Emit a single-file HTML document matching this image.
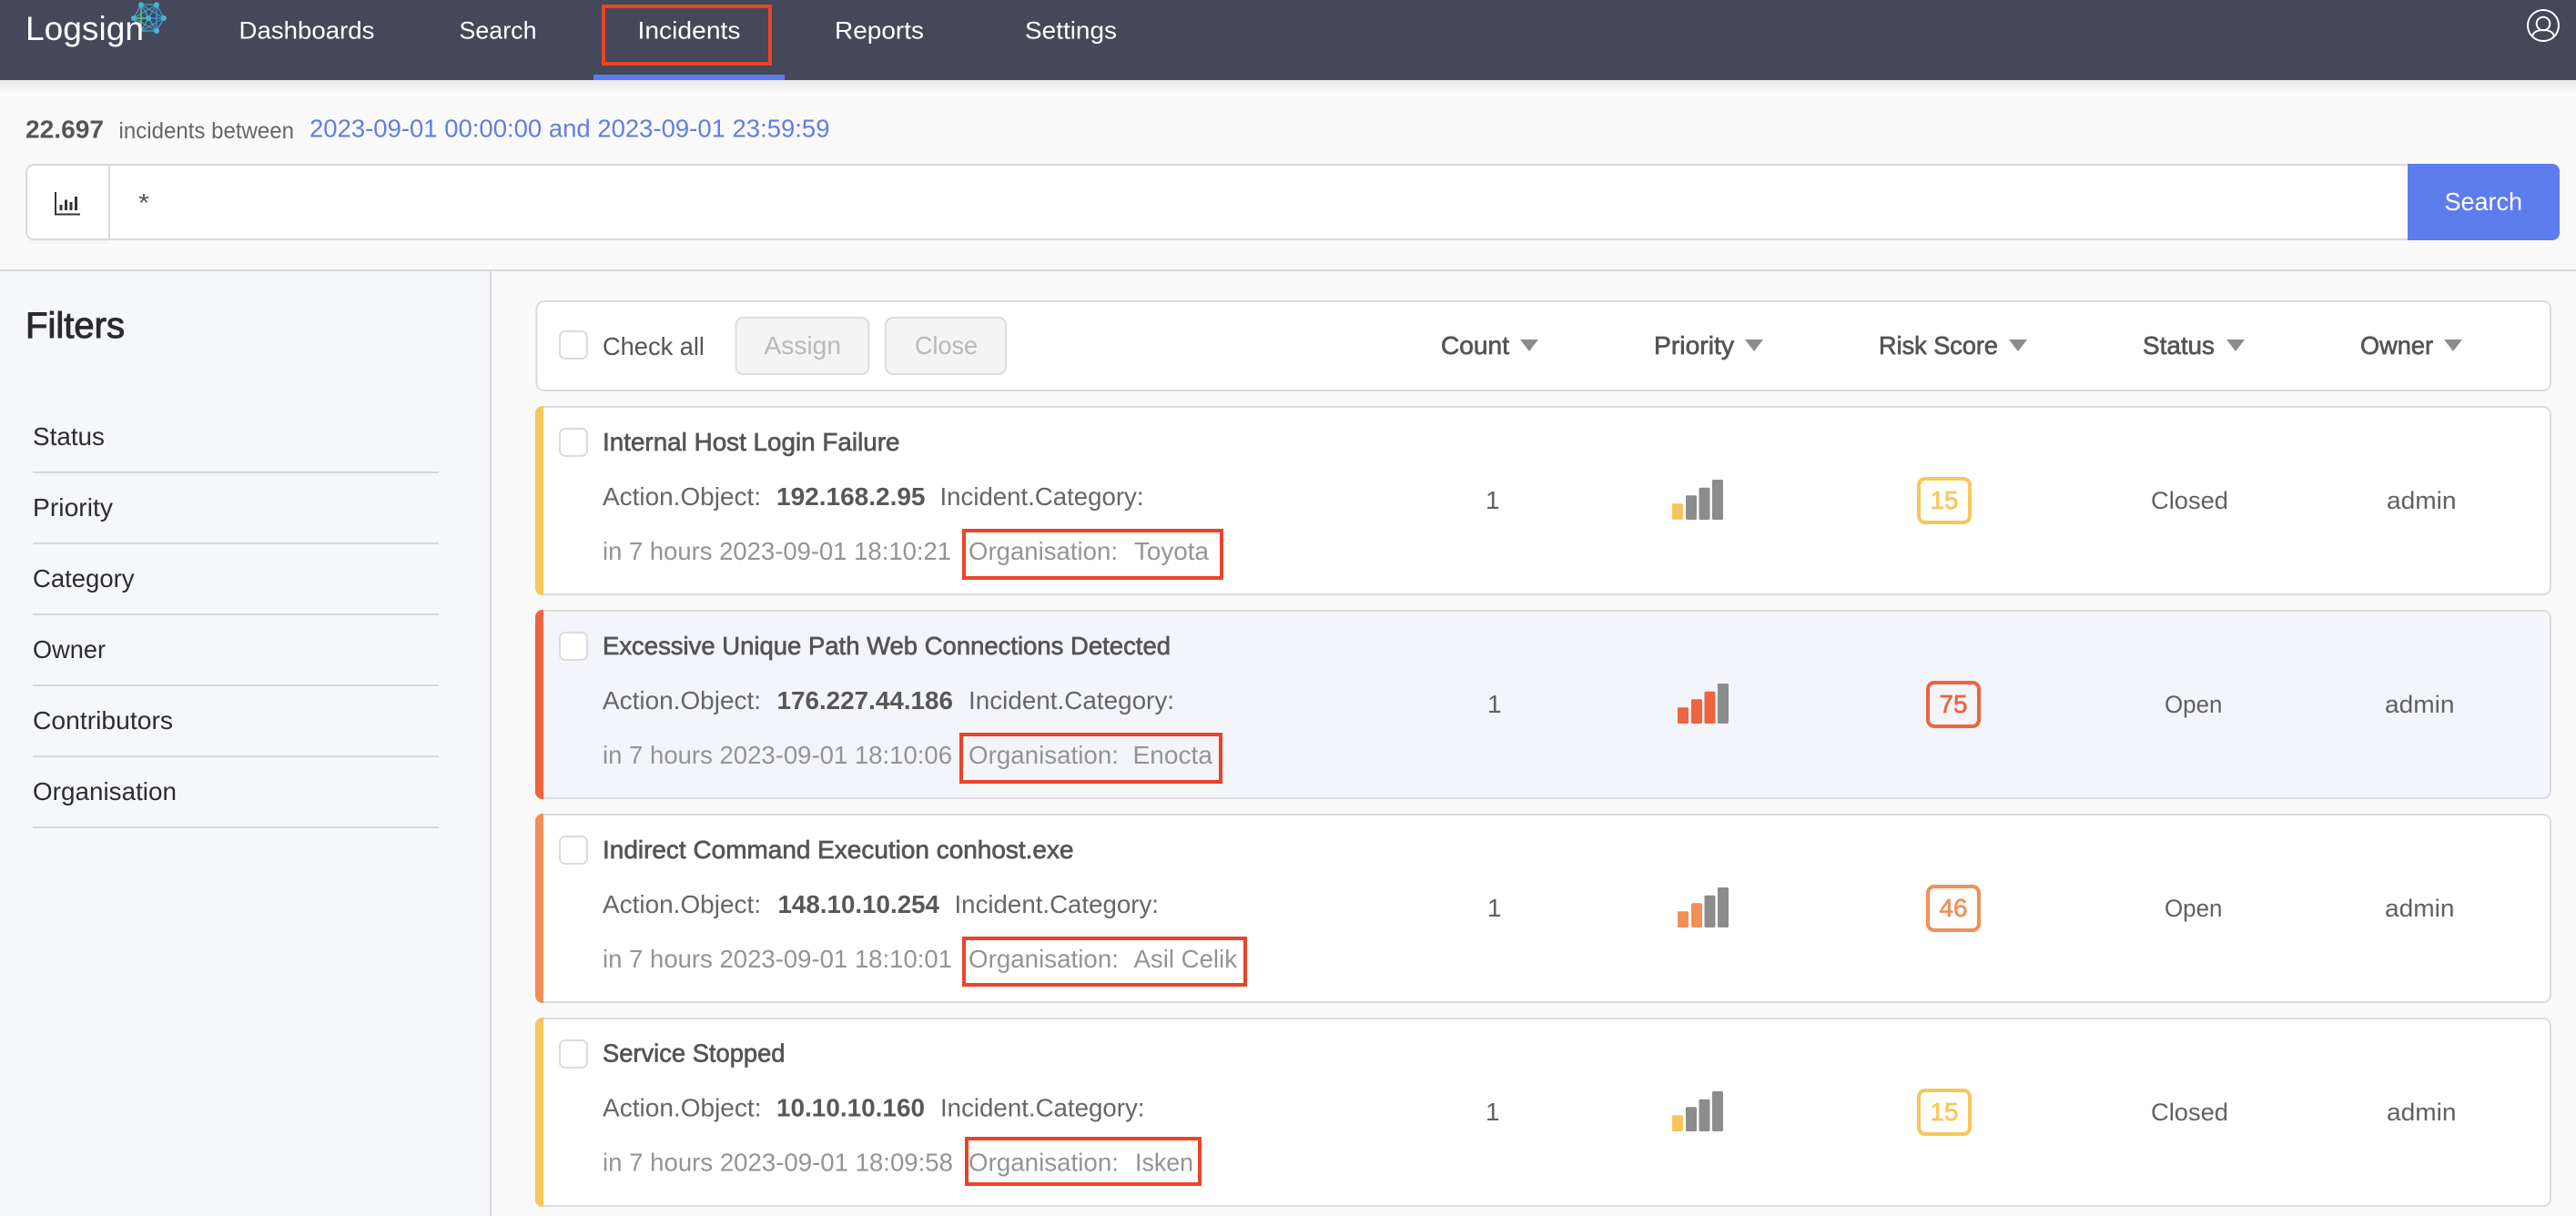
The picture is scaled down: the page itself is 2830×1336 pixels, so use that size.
<!DOCTYPE html>
<html lang="en"><head><meta charset="utf-8"><title>Logsign Incidents</title>
<style>
html,body{margin:0;padding:0;background:#fafafa;width:2830px;height:1336px;overflow:hidden}
svg{display:block}
text{font-family:"Liberation Sans",sans-serif;font-size:28px;white-space:pre}
.nav{font-size:27px;fill:#fff}
.m{stroke-width:.7px}
.side{fill:#2d2d2d}
.t{fill:#555;stroke:#555}
.l{fill:#666}
.b{fill:#585858;font-weight:bold}
.d{fill:#949494}
.h{fill:#555;stroke:#555}
.v{fill:#616161;font-size:27px}
.one{fill:#616161;font-size:28px}
.red{fill:none;stroke:#ea4426;stroke-width:4}
.card{stroke:#dcdcdc;stroke-width:2}
.cb{fill:#fff;stroke:#dcdcdc;stroke-width:2}
.tri{fill:#8c8c8c}
.g{fill:#8c8c8c}
</style></head>
<body>
<svg xmlns="http://www.w3.org/2000/svg" width="2830" height="1336" viewBox="0 0 2830 1336">
<defs><linearGradient id="sh" x1="0" y1="0" x2="0" y2="1"><stop offset="0" stop-color="#000" stop-opacity=".07"/><stop offset="1" stop-color="#000" stop-opacity="0"/></linearGradient></defs>
<rect width="2830" height="1336" fill="#fafafa"/>
<!-- header -->
<rect x="0" y="88" width="2830" height="14" fill="url(#sh)"/>
<rect width="2830" height="88" fill="#454859"/>
<rect x="652" y="82" width="210" height="6" fill="#5c7bee"/>
<rect x="663" y="7" width="183" height="63" class="red"/>
<g stroke-width="1.2" fill="none">
<path d="M155 5H172L180 20L172 34H155L147 20Z" stroke="#41a9d8"/>
<path d="M155 5L163 20L172 34M172 5L163 20L155 34M155 5L172 34M172 5L155 34M155 5L180 20M172 5L147 20M147 20L172 34M180 20L155 34" stroke="#3f9fc4"/>
<path d="M147 20H163M155 5V34" stroke="#63c77b" stroke-width="1.6"/>
<path d="M163 20H180M172 5V34" stroke="#3f8fe0" stroke-width="1.6"/>
</g>
<g fill="#45b6d2"><circle cx="155" cy="5.3" r="3"/><circle cx="172" cy="5.3" r="3"/><circle cx="147" cy="20" r="3"/><circle cx="163" cy="20" r="3"/><circle cx="180" cy="20" r="3"/><circle cx="172" cy="34" r="3"/></g>
<text x="28" y="44" fill="#fff" textLength="130" lengthAdjust="spacingAndGlyphs" style="font-size:37px">Logsign</text>
<text class="nav" x="262.500" y="42.500" textLength="149" lengthAdjust="spacingAndGlyphs">Dashboards</text>
<text class="nav" x="504.500" y="42.500" textLength="85" lengthAdjust="spacingAndGlyphs">Search</text>
<text class="nav" x="700.500" y="42.500" textLength="113" lengthAdjust="spacingAndGlyphs">Incidents</text>
<text class="nav" x="917" y="42.500" textLength="98" lengthAdjust="spacingAndGlyphs">Reports</text>
<text class="nav" x="1126" y="42.500" textLength="101" lengthAdjust="spacingAndGlyphs">Settings</text>
<g fill="none" stroke="#fff" stroke-width="2"><circle cx="2794" cy="28" r="17"/><circle cx="2794" cy="26" r="7.300"/><path d="M2782 40C2783 35 2788 33 2794 33C2800 33 2805 35 2806 40"/></g>
<!-- summary -->
<text x="28" y="151.500" style="font-weight:bold" fill="#555" textLength="86" lengthAdjust="spacingAndGlyphs">22.697</text>
<text x="130.500" y="152" style="font-size:25px" fill="#666" textLength="192.500" lengthAdjust="spacingAndGlyphs">incidents between</text>
<text x="340" y="150.500" fill="#5f7de8" textLength="571.500" lengthAdjust="spacingAndGlyphs">2023-09-01 00:00:00 and 2023-09-01 23:59:59</text>
<!-- search bar -->
<rect x="28" y="264" width="92" height="4" fill="#000" opacity=".02"/>
<path d="M2646 181H37a8 8 0 0 0-8 8V255a8 8 0 0 0 8 8H2646" fill="#fff" stroke="#d9d9d9" stroke-width="2"/>
<rect x="119" y="181" width="2" height="82" fill="#d9d9d9"/>
<path d="M61 211V235.500H88" fill="none" stroke="#333" stroke-width="2"/>
<g fill="#333"><rect x="65.500" y="225" width="3" height="6"/><rect x="71" y="219.500" width="3" height="11.500"/><rect x="76.500" y="222" width="3" height="9"/><rect x="82" y="216" width="3" height="15"/></g>
<text x="152" y="232" fill="#555" textLength="12" lengthAdjust="spacingAndGlyphs">*</text>
<path d="M2645 180H2804a8 8 0 0 1 8 8V256a8 8 0 0 1-8 8H2645Z" fill="#5d7cee"/>
<text x="2685.500" y="231" fill="#fff" textLength="85.500" lengthAdjust="spacingAndGlyphs">Search</text>
<rect x="0" y="296" width="2830" height="2" fill="#d9d9d9"/>
<!-- sidebar -->
<rect x="0" y="298" width="538" height="1038" fill="#f5f7fb"/>
<rect x="538" y="298" width="2" height="1038" fill="#d9d9d9"/>
<text x="28" y="371" style="font-size:40px;stroke-width:1px" stroke="#2b2b2b" fill="#2b2b2b" textLength="109" lengthAdjust="spacingAndGlyphs">Filters</text>
<text class="side" x="36" y="489" textLength="79" lengthAdjust="spacingAndGlyphs">Status</text>
<text class="side" x="36" y="567" textLength="88" lengthAdjust="spacingAndGlyphs">Priority</text>
<text class="side" x="36" y="645" textLength="111.500" lengthAdjust="spacingAndGlyphs">Category</text>
<text class="side" x="36" y="723" textLength="80" lengthAdjust="spacingAndGlyphs">Owner</text>
<text class="side" x="36" y="801" textLength="154" lengthAdjust="spacingAndGlyphs">Contributors</text>
<text class="side" x="36" y="879" textLength="158" lengthAdjust="spacingAndGlyphs">Organisation</text>
<g fill="#d6d8da"><rect x="36" y="518" width="446" height="2"/><rect x="36" y="596" width="446" height="2"/><rect x="36" y="674" width="446" height="2"/><rect x="36" y="752" width="446" height="2"/><rect x="36" y="830" width="446" height="2"/><rect x="36" y="908" width="446" height="2"/></g>
<!-- toolbar -->
<rect x="589.500" y="331" width="2212.500" height="98" rx="8" fill="#fff" class="card"/>
<rect x="615" y="364" width="30" height="30" rx="6" class="cb"/>
<text x="662" y="390" fill="#555" textLength="112" lengthAdjust="spacingAndGlyphs">Check all</text>
<rect x="808.500" y="349" width="146" height="62" rx="8" fill="#f4f4f4" stroke="#dcdcdc" stroke-width="2"/>
<text x="839.500" y="389" fill="#b9b9b9" textLength="84.500" lengthAdjust="spacingAndGlyphs">Assign</text>
<rect x="973" y="349" width="132" height="62" rx="8" fill="#f4f4f4" stroke="#dcdcdc" stroke-width="2"/>
<text x="1005" y="389" fill="#b9b9b9" textLength="69" lengthAdjust="spacingAndGlyphs">Close</text>
<text class="h m" x="1583" y="389" textLength="75" lengthAdjust="spacingAndGlyphs">Count</text>
<path class="tri" d="M1670 373H1690L1680 386Z"/>
<text class="h m" x="1817" y="389" textLength="88" lengthAdjust="spacingAndGlyphs">Priority</text>
<path class="tri" d="M1917 373H1937L1927 386Z"/>
<text class="h m" x="2064" y="389" textLength="131" lengthAdjust="spacingAndGlyphs">Risk Score</text>
<path class="tri" d="M2207 373H2227L2217 386Z"/>
<text class="h m" x="2354" y="389" textLength="79" lengthAdjust="spacingAndGlyphs">Status</text>
<path class="tri" d="M2446 373H2466L2456 386Z"/>
<text class="h m" x="2593" y="389" textLength="80" lengthAdjust="spacingAndGlyphs">Owner</text>
<path class="tri" d="M2685 373H2705L2695 386Z"/>

<!-- card 1 -->
<g>
<rect x="589.500" y="447" width="2212.500" height="206" rx="8" fill="#fff" class="card"/>
<path d="M597 446H596a8 8 0 0 0-8 8V646a8 8 0 0 0 8 8H597Z" fill="#f7c75a"/>
<rect x="615" y="471" width="30" height="30" rx="6" class="cb"/>
<text class="t m" x="662" y="495" textLength="326.500" lengthAdjust="spacingAndGlyphs">Internal Host Login Failure</text>
<text class="l" x="662" y="555" textLength="174" lengthAdjust="spacingAndGlyphs">Action.Object:</text>
<text class="b" x="853" y="555" textLength="163.500" lengthAdjust="spacingAndGlyphs">192.168.2.95</text>
<text class="l" x="1032.500" y="555" textLength="224" lengthAdjust="spacingAndGlyphs">Incident.Category:</text>
<text class="d" x="662" y="615" textLength="383" lengthAdjust="spacingAndGlyphs">in 7 hours 2023-09-01 18:10:21</text>
<text class="d" x="1064" y="615" textLength="164" lengthAdjust="spacingAndGlyphs">Organisation:</text>
<text class="d" x="1246" y="615" textLength="82" lengthAdjust="spacingAndGlyphs">Toyota</text>
<rect x="1059" y="583" width="283" height="52" class="red"/>
<text class="one" x="1632" y="559">1</text>
<rect x="1837" y="553.300" width="12" height="17.700" rx="1.500" fill="#f7c75a"/><rect class="g" x="1852" y="544.300" width="12" height="26.700" rx="1.500"/><rect class="g" x="1866.500" y="535.700" width="12" height="35.300" rx="1.500"/><rect class="g" x="1881" y="527" width="12" height="44" rx="1.500"/>
<rect x="2108" y="526" width="56" height="48" rx="7" fill="none" stroke="#f7c75a" stroke-width="4"/>
<text x="2120.500" y="559" fill="#f7c75a" stroke="#f7c75a" class="m" textLength="31" lengthAdjust="spacingAndGlyphs">15</text>
<text class="v" x="2363" y="559" textLength="85" lengthAdjust="spacingAndGlyphs">Closed</text>
<text class="v" x="2622" y="559" textLength="76.500" lengthAdjust="spacingAndGlyphs">admin</text>
</g>
<!-- card 2 -->
<g>
<rect x="589.500" y="671" width="2212.500" height="206" rx="8" fill="#f3f5fa" class="card"/>
<path d="M597 670H596a8 8 0 0 0-8 8V870a8 8 0 0 0 8 8H597Z" fill="#ed6441"/>
<rect x="615" y="695" width="30" height="30" rx="6" class="cb"/>
<text class="t m" x="662" y="719" textLength="624" lengthAdjust="spacingAndGlyphs">Excessive Unique Path Web Connections Detected</text>
<text class="l" x="662" y="779" textLength="174" lengthAdjust="spacingAndGlyphs">Action.Object:</text>
<text class="b" x="853.500" y="779" textLength="193.500" lengthAdjust="spacingAndGlyphs">176.227.44.186</text>
<text class="l" x="1064" y="779" textLength="226" lengthAdjust="spacingAndGlyphs">Incident.Category:</text>
<text class="d" x="662" y="839" textLength="384" lengthAdjust="spacingAndGlyphs">in 7 hours 2023-09-01 18:10:06</text>
<text class="d" x="1064" y="839" textLength="165" lengthAdjust="spacingAndGlyphs">Organisation:</text>
<text class="d" x="1244.500" y="839" textLength="87.500" lengthAdjust="spacingAndGlyphs">Enocta</text>
<rect x="1056" y="807" width="285" height="52" class="red"/>
<text class="one" x="1634" y="783">1</text>
<rect x="1843" y="777.300" width="12" height="17.700" rx="1.500" fill="#ed6441"/><rect x="1858" y="768.300" width="12" height="26.700" rx="1.500" fill="#ed6441"/><rect x="1872.500" y="759.700" width="12" height="35.300" rx="1.500" fill="#ed6441"/><rect class="g" x="1887" y="751" width="12" height="44" rx="1.500"/>
<rect x="2118" y="750" width="56" height="48" rx="7" fill="none" stroke="#ed6441" stroke-width="4"/>
<text x="2130.500" y="783" fill="#ed6441" stroke="#ed6441" class="m" textLength="31" lengthAdjust="spacingAndGlyphs">75</text>
<text class="v" x="2378" y="783" textLength="63.500" lengthAdjust="spacingAndGlyphs">Open</text>
<text class="v" x="2620" y="783" textLength="76.500" lengthAdjust="spacingAndGlyphs">admin</text>
</g>
<!-- card 3 -->
<g>
<rect x="589.500" y="895" width="2212.500" height="206" rx="8" fill="#fff" class="card"/>
<path d="M597 894H596a8 8 0 0 0-8 8V1094a8 8 0 0 0 8 8H597Z" fill="#f28f59"/>
<rect x="615" y="919" width="30" height="30" rx="6" class="cb"/>
<text class="t m" x="662" y="943" textLength="517.500" lengthAdjust="spacingAndGlyphs">Indirect Command Execution conhost.exe</text>
<text class="l" x="662" y="1003" textLength="174" lengthAdjust="spacingAndGlyphs">Action.Object:</text>
<text class="b" x="854.500" y="1003" textLength="177.500" lengthAdjust="spacingAndGlyphs">148.10.10.254</text>
<text class="l" x="1048.500" y="1003" textLength="224.500" lengthAdjust="spacingAndGlyphs">Incident.Category:</text>
<text class="d" x="662" y="1063" textLength="384" lengthAdjust="spacingAndGlyphs">in 7 hours 2023-09-01 18:10:01</text>
<text class="d" x="1064" y="1063" textLength="165" lengthAdjust="spacingAndGlyphs">Organisation:</text>
<text class="d" x="1245.500" y="1063" textLength="113.500" lengthAdjust="spacingAndGlyphs">Asil Celik</text>
<rect x="1059" y="1031" width="309" height="51" class="red"/>
<text class="one" x="1634" y="1007">1</text>
<rect x="1843" y="1001.300" width="12" height="17.700" rx="1.500" fill="#f28f59"/><rect x="1858" y="992.300" width="12" height="26.700" rx="1.500" fill="#f28f59"/><rect class="g" x="1872.500" y="983.700" width="12" height="35.300" rx="1.500"/><rect class="g" x="1887" y="975" width="12" height="44" rx="1.500"/>
<rect x="2118" y="974" width="56" height="48" rx="7" fill="none" stroke="#f28f59" stroke-width="4"/>
<text x="2130.500" y="1007" fill="#f28f59" stroke="#f28f59" class="m" textLength="31" lengthAdjust="spacingAndGlyphs">46</text>
<text class="v" x="2378" y="1007" textLength="63.500" lengthAdjust="spacingAndGlyphs">Open</text>
<text class="v" x="2620" y="1007" textLength="76.500" lengthAdjust="spacingAndGlyphs">admin</text>
</g>
<!-- card 4 -->
<g>
<rect x="589.500" y="1119" width="2212.500" height="206" rx="8" fill="#fff" class="card"/>
<path d="M597 1118H596a8 8 0 0 0-8 8V1318a8 8 0 0 0 8 8H597Z" fill="#f7c75a"/>
<rect x="615" y="1143" width="30" height="30" rx="6" class="cb"/>
<text class="t m" x="662" y="1166.500" textLength="200.500" lengthAdjust="spacingAndGlyphs">Service Stopped</text>
<text class="l" x="662" y="1226.500" textLength="174.500" lengthAdjust="spacingAndGlyphs">Action.Object:</text>
<text class="b" x="853" y="1226.500" textLength="163" lengthAdjust="spacingAndGlyphs">10.10.10.160</text>
<text class="l" x="1033" y="1226.500" textLength="224.500" lengthAdjust="spacingAndGlyphs">Incident.Category:</text>
<text class="d" x="662" y="1286.500" textLength="385" lengthAdjust="spacingAndGlyphs">in 7 hours 2023-09-01 18:09:58</text>
<text class="d" x="1064" y="1286.500" textLength="165" lengthAdjust="spacingAndGlyphs">Organisation:</text>
<text class="d" x="1247" y="1286.500" textLength="64" lengthAdjust="spacingAndGlyphs">Isken</text>
<rect x="1062" y="1251" width="256" height="50" class="red"/>
<text class="one" x="1632" y="1231">1</text>
<rect x="1837" y="1225.300" width="12" height="17.700" rx="1.500" fill="#f7c75a"/><rect class="g" x="1852" y="1216.300" width="12" height="26.700" rx="1.500"/><rect class="g" x="1866.500" y="1207.700" width="12" height="35.300" rx="1.500"/><rect class="g" x="1881" y="1199" width="12" height="44" rx="1.500"/>
<rect x="2108" y="1198" width="56" height="48" rx="7" fill="none" stroke="#f7c75a" stroke-width="4"/>
<text x="2120.500" y="1231" fill="#f7c75a" stroke="#f7c75a" class="m" textLength="31" lengthAdjust="spacingAndGlyphs">15</text>
<text class="v" x="2363" y="1231" textLength="85" lengthAdjust="spacingAndGlyphs">Closed</text>
<text class="v" x="2622" y="1231" textLength="76.500" lengthAdjust="spacingAndGlyphs">admin</text>
</g>
</svg>
</body></html>
